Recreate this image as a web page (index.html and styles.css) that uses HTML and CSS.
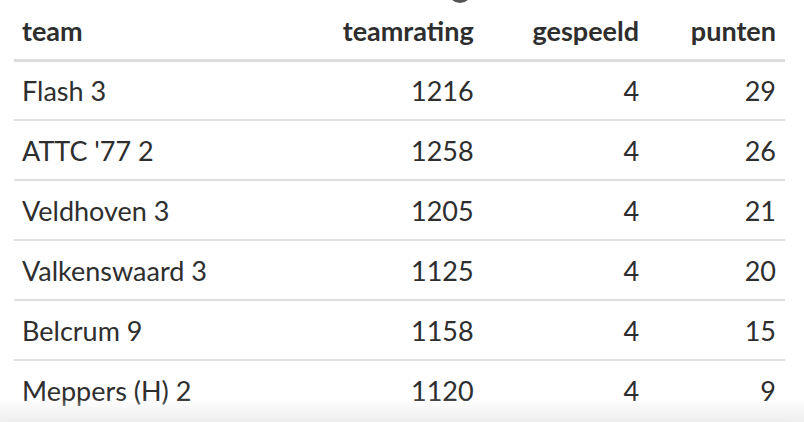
FILE: index.html
```html
<!DOCTYPE html>
<html lang="nl">
<head>
<meta charset="utf-8">
<title>Stand</title>
<link rel="stylesheet" href="styles.css">
</head>
<body>
<div class="page">
  <div class="avatar"></div>
  <table class="standings">
    <thead>
      <tr>
        <th class="col-team">team</th>
        <th class="num">teamrating</th>
        <th class="num">gespeeld</th>
        <th class="num">punten</th>
      </tr>
    </thead>
    <tbody>
      <tr><td>Flash 3</td><td class="num">1216</td><td class="num">4</td><td class="num">29</td></tr>
      <tr><td>ATTC '77 2</td><td class="num">1258</td><td class="num">4</td><td class="num">26</td></tr>
      <tr><td>Veldhoven 3</td><td class="num">1205</td><td class="num">4</td><td class="num">21</td></tr>
      <tr><td>Valkenswaard 3</td><td class="num">1125</td><td class="num">4</td><td class="num">20</td></tr>
      <tr><td>Belcrum 9</td><td class="num">1158</td><td class="num">4</td><td class="num">15</td></tr>
      <tr><td>Meppers (H) 2</td><td class="num">1120</td><td class="num">4</td><td class="num">9</td></tr>
    </tbody>
  </table>
  <div class="fade"></div>
</div>
</body>
</html>
```

FILE: styles.css
```css
html, body {
  margin: 0;
  padding: 0;
  background: #fff;
}
body {
  width: 804px;
  height: 422px;
  overflow: hidden;
  font-family: Lato, "Noto Sans", sans-serif;
  color: #2e2e2e;
}
.page {
  position: relative;
  width: 804px;
  height: 422px;
  overflow: hidden;
  padding-left: 14px;
  box-sizing: border-box;
}
.avatar {
  position: absolute;
  left: 448px;
  top: -21px;
  width: 24px;
  height: 24px;
  border-radius: 50%;
  background: #555;
}
.standings {
  width: 771px;
  border-collapse: collapse;
  font-size: 27px;
}
.standings th {
  font-weight: 700;
  height: 60px;
  padding: 2px 9px 0 8px;
  box-sizing: border-box;
  vertical-align: middle;
  text-align: left;
  border-bottom: 3px solid #dcdcdc;
}
.standings td {
  height: 60px;
  padding: 0 9px 0 8px;
  box-sizing: border-box;
  vertical-align: middle;
  border-bottom: 2px solid #e0e0e0;
}
.standings .num {
  text-align: right;
}
.fade {
  position: absolute;
  left: 0;
  right: 0;
  bottom: 0;
  height: 24px;
  background: linear-gradient(to bottom, rgba(240,240,240,0), #eeeeee);
}
```
